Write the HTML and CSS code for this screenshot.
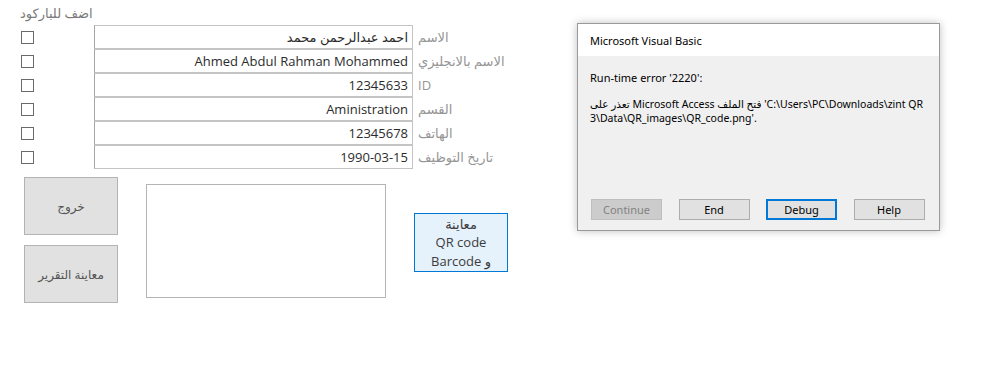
FILE: index.html
```html
<html>
<head>
  <title>بيانات الموظف</title>
  <meta http-equiv="Content-Type" content="text/html; charset=utf-8">
  <link rel="stylesheet" href="styles.css">
</head>
<body>
  <div class="form">
    <div class="barcode-head">اضف للباركود</div>
    <div class="rows">
      <div class="row">
        <span class="check"></span>
        <div class="field" dir="rtl">احمد عبدالرحمن محمد</div>
        <div class="label" dir="rtl">الاسم</div>
      </div>
      <div class="row">
        <span class="check"></span>
        <div class="field">Ahmed Abdul Rahman Mohammed</div>
        <div class="label" dir="rtl">الاسم بالانجليزي</div>
      </div>
      <div class="row">
        <span class="check"></span>
        <div class="field">12345633</div>
        <div class="label">ID</div>
      </div>
      <div class="row">
        <span class="check"></span>
        <div class="field">Aministration</div>
        <div class="label" dir="rtl">القسم</div>
      </div>
      <div class="row">
        <span class="check"></span>
        <div class="field">12345678</div>
        <div class="label" dir="rtl">الهاتف</div>
      </div>
      <div class="row">
        <span class="check"></span>
        <div class="field">1990-03-15</div>
        <div class="label" dir="rtl">تاريخ التوظيف</div>
      </div>
    </div>
    <div class="bottom">
      <div class="btn-col">
        <button class="btn">خروج</button>
        <button class="btn">معاينة التقرير</button>
      </div>
      <div class="preview"></div>
      <button class="btn-preview"><span dir="rtl">معاينة</span><br>QR code<br><span dir="rtl">و Barcode</span></button>
    </div>
  </div>

  <div class="dialog">
    <div class="dialog-title">Microsoft Visual Basic</div>
    <div class="dialog-body">
      <p class="err">Run-time error '2220':</p>
      <p class="msg">تعذر على Microsoft Access فتح الملف 'C:\Users\PC\Downloads\zint QR<br>3\Data\QR_images\QR_code.png'.</p>
      <div class="dialog-buttons">
        <button class="dlg-btn disabled">Continue</button>
        <button class="dlg-btn">End</button>
        <button class="dlg-btn default">Debug</button>
        <button class="dlg-btn">Help</button>
      </div>
    </div>
  </div>
</body>
</html>
```

FILE: styles.css
```css
html {
  box-sizing: border-box;
}
*, *:before, *:after {
  box-sizing: inherit;
}
body {
  margin: 0;
  padding: 0;
  background: #ffffff;
  font-family: "Open Sans", "DejaVu Sans", sans-serif;
}
.form {
  padding: 4px 0 0 0;
}
.barcode-head {
  height: 21px;
  padding-left: 20px;
  font-size: 13px;
  color: #7a7a7a;
}
.rows {
  display: flex;
  flex-direction: column;
}
.row {
  display: flex;
  align-items: center;
  height: 24px;
}
.check {
  display: block;
  width: 13px;
  height: 13px;
  margin-left: 21px;
  margin-right: 60px;
  border: 1px solid #6a6a6a;
  background: #ffffff;
}
.field {
  width: 319px;
  height: 24px;
  padding: 0 4px;
  border: 1px solid #c4c4c4;
  border-left-color: #a6a6a6;
  text-align: right;
  font-size: 13px;
  line-height: 22px;
  color: #2b2b2b;
}
.label {
  padding-left: 5px;
  font-size: 13px;
  color: #959595;
}
.bottom {
  display: flex;
  align-items: flex-start;
  margin-top: 8px;
  padding-left: 24px;
}
.btn-col {
  display: flex;
  flex-direction: column;
  gap: 10px;
}
.btn {
  width: 94px;
  height: 58px;
  background: #e1e1e1;
  border: 1px solid #b4b4b4;
  font-family: "Open Sans", "DejaVu Sans", sans-serif;
  font-size: 12px;
  color: #555555;
  padding: 0;
}
.preview {
  width: 240px;
  height: 114px;
  margin-top: 7px;
  margin-left: 28px;
  border: 1px solid #b4b4b4;
  background: #ffffff;
}
.btn-preview {
  width: 94px;
  height: 59px;
  margin-top: 36px;
  margin-left: 28px;
  background: #e5f1fb;
  border: 1px solid #0078d7;
  font-family: "Open Sans", "DejaVu Sans", sans-serif;
  font-size: 13px;
  line-height: 18.5px;
  color: #3c3c3c;
  padding: 0;
}
.dialog {
  position: absolute;
  left: 577px;
  top: 23px;
  width: 363px;
  height: 208px;
  border: 1px solid #9a9a9a;
  background: #f0f0f0;
  box-shadow: 0 0 8px rgba(0, 0, 0, 0.25);
  font-family: "Noto Sans", "DejaVu Sans", sans-serif;
  font-size: 11px;
  color: #000000;
}
.dialog-title {
  height: 32px;
  padding: 9px 0 0 12px;
  background: #ffffff;
  font-size: 11px;
}
.dialog-body {
  padding: 14px 12px 0 12px;
}
.err {
  margin: 0;
  line-height: 16px;
}
.msg {
  margin: 11px 0 0 0;
  font-size: 10.5px;
  line-height: 14px;
  white-space: nowrap;
}
.dialog-buttons {
  display: flex;
  gap: 16.5px;
  margin-top: 74px;
  padding-left: 1px;
}
.dlg-btn {
  width: 71px;
  height: 21px;
  padding: 0;
  background: #e1e1e1;
  border: 1px solid #adadad;
  font-family: "Noto Sans", "DejaVu Sans", sans-serif;
  font-size: 11px;
  color: #000000;
}
.dlg-btn.disabled {
  background: #cccccc;
  border-color: #bfbfbf;
  color: #838383;
}
.dlg-btn.default {
  border: 2px solid #0078d7;
}
```
